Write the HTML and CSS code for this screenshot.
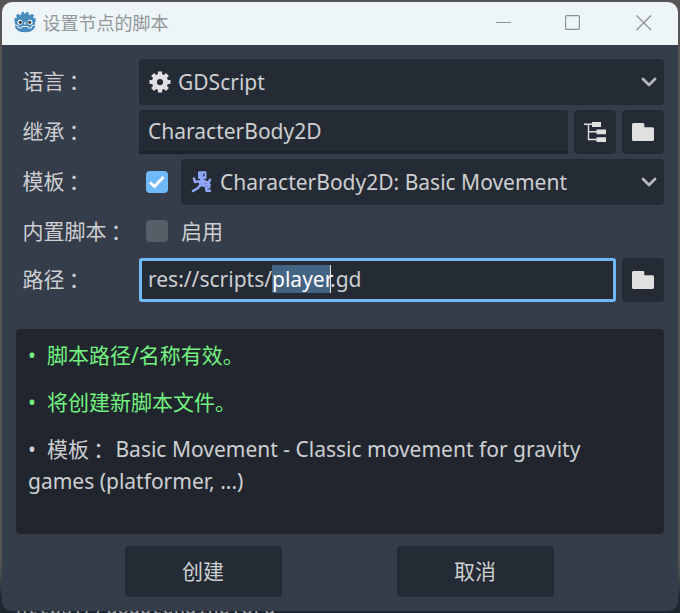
FILE: index.html
```html
<!DOCTYPE html>
<html lang="zh-CN">
<head>
<meta charset="utf-8">
<title>设置节点的脚本</title>
<link rel="stylesheet" href="styles.css">
</head>
<body>
<div class="backdrop-text" aria-hidden="true">https://godotengine.org</div>
<main class="window">
  <header class="titlebar">
    <svg class="logo" viewBox="0 0 22 22">
      <path fill="#478cbf" d="M7.500 1.500 9.500.5 10.300 2.500H11.700L12.500.5 14.500 1.500 14.700 3.500 16 4.300 18 2.700 20 4.600 19 7H21.500V11H21V16Q19 21.300 11 21.300T1 16V11H.5V7H3L2 4.600 4 2.700 6 4.300 7.300 3.500Z"/>
      <path fill="none" stroke="#fff" stroke-width=".9" d="M1 14 4 14.500 4.500 17H7.500L8 15.500H14L14.500 17H17.500L18 14.500 21 14"/>
      <circle cx="6" cy="11.300" r="2.500" fill="#fff"/><circle cx="16" cy="11.300" r="2.500" fill="#fff"/>
      <circle cx="6.300" cy="11.300" r="1.600" fill="#414042"/><circle cx="15.700" cy="11.300" r="1.600" fill="#414042"/>
      <path stroke="#fff" stroke-width="1.300" d="M11 11V13.500"/>
    </svg>
    <span class="title">设置节点的脚本</span>
    <svg class="controls" viewBox="0 0 156 16" fill="none" stroke="#8b9092" stroke-width="1.200">
      <path d="M0 7.500H15"/><rect x="69.600" y=".6" width="13.800" height="13.800" rx="1"/><path d="M140.500.5 155 15M155 .5 140.500 15"/>
    </svg>
  </header>
  <form class="form">
    <div class="row"><label>语言<i lang="zh-TW">：</i></label>
      <div class="select">
        <svg class="icon" viewBox="0 0 22 22"><path fill="none" stroke="#e0e0e0" stroke-width="4.200" d="M11 .5V5M11 17V21.500M.5 11H5M17 11H21.500M3.600 3.600 6.800 6.800M15.200 15.200 18.400 18.400M3.600 18.400 6.800 15.200M15.200 6.800 18.400 3.600"/><circle cx="11" cy="11" r="5.600" fill="none" stroke="#e0e0e0" stroke-width="5"/></svg>
        <span>GDScript</span>
        <svg class="chevron" viewBox="0 0 16 10"><path d="M2 2 8 8 14 2"/></svg>
      </div>
    </div>
    <div class="row short"><label>继承<i lang="zh-TW">：</i></label>
      <div class="input">CharacterBody2D</div>
      <div class="tool"><svg class="icon" viewBox="0 0 22 22"><path fill="none" stroke="#e0e0e0" stroke-width="1.400" d="M0 3.300H8M4.500 3V18.500H13M4.500 10.800H13"/><path fill="#e0e0e0" d="M8 1H17V6H8ZM12.500 8.500H22V13.300H12.500ZM12.500 16.200H22V21H12.500Z"/></svg></div>
      <div class="tool"><svg class="icon" viewBox="0 0 22 22"><path fill="#e0e0e0" d="M1.500 2H11Q12.300 2 12.300 3.300V6.300H20.500Q22 6.300 22 7.800V18.500Q22 20 20.500 20H1.500Q0 20 0 18.500V3.500Q0 2 1.500 2Z"/></svg></div>
    </div>
    <div class="row"><label>模板<i lang="zh-TW">：</i></label>
      <span class="check on"><svg viewBox="0 0 22 22"><path d="M4 11.500 8.500 15.500 17.500 6"/></svg></span>
      <div class="select">
        <svg class="icon" viewBox="0 0 22 22"><path fill="#8da5f3" d="M7 1Q7 .3 8 .3H14.500Q15.500 .3 15.500 1.300V7Q15.500 8 14.500 8H13V9.500H9V8H8Q7 8 7 7Z"/><path fill="#252b34" d="M12.200 2.800H13.500V5.300H12.200Z"/><path fill="none" stroke="#8da5f3" stroke-width="2.600" stroke-linecap="round" stroke-linejoin="round" d="M3 7.500 4 11 9 10.300H14L17.500 12 19 8.800M9.500 14 6.500 17.300 2 20M12.500 14.500 18.500 13.500M18.500 14 18 16.500 15 16.800 15.500 19.800H19"/><path fill="#8da5f3" d="M8 9.500H14.500V15.500H8Z"/></svg>
        <span>CharacterBody2D: Basic Movement</span>
        <svg class="chevron" viewBox="0 0 16 10"><path d="M2 2 8 8 14 2"/></svg>
      </div>
    </div>
    <div class="row mid"><label>内置脚本<i lang="zh-TW">：</i></label>
      <span class="check"></span><span class="enable">启用</span>
    </div>
    <div class="row path"><label>路径<i lang="zh-TW">：</i></label>
      <div class="input focus">res://scripts/<span class="selected">player</span>.gd</div>
      <div class="tool"><svg class="icon" viewBox="0 0 22 22"><path fill="#e0e0e0" d="M1.500 2H11Q12.300 2 12.300 3.300V6.300H20.500Q22 6.300 22 7.800V18.500Q22 20 20.500 20H1.500Q0 20 0 18.500V3.500Q0 2 1.500 2Z"/></svg></div>
    </div>
  </form>
  <section class="status">
    <p class="ok"><b>•</b>脚本路径/名称有效。</p>
    <p class="ok"><b>•</b>将创建新脚本文件。</p>
    <p><b>•</b>模板<i lang="zh-TW">：</i> Basic Movement - Classic movement for gravity games (platformer, ...)</p>
  </section>
  <footer class="actions"><button>创建</button><button>取消</button></footer>
</main>
</body>
</html>
```
FILE: styles.css
```css
* { box-sizing: border-box; }
body {
  margin: 0;
  width: 680px;
  height: 613px;
  padding: 2px;
  overflow: hidden;
  position: relative;
  background: linear-gradient(#555 0 560px, #46494d 575px, #20262f 600px);
  font: 21px/32px "Noto Sans", "Noto Sans CJK SC", sans-serif;
  color: #cdcfd2;
}
.backdrop-text {
  position: absolute;
  left: 16px;
  top: 599px;
  font: 18.8px/20px "Liberation Mono", monospace;
  color: #a0a3a7;
}
.window {
  position: relative;
  height: 609px;
  border-radius: 10px;
  overflow: hidden;
  background: #363d4a;
}
.titlebar {
  height: 43px;
  display: flex;
  align-items: center;
  padding: 0 26px 2px 12px;
  background: #edf5f8;
}
.logo { width: 22px; height: 22px; margin-top: -1px; }
.title {
  margin: -2px 0 0 6.500px;
  font: 18px/26px "Noto Sans CJK SC", sans-serif;
  color: #929799;
}
.controls { width: 156px; height: 16px; margin-left: auto; }
.form { padding: 14px 14px 0; display: flex; flex-direction: column; gap: 4px; }
.row { display: flex; height: 46px; align-items: center; }
.row.short { height: 44px; margin: 1px 0; }
.row.path { height: 44px; margin-top: -1px; }
label { width: 123px; padding: 0 0 3px 6.500px; flex: none; }
.enable { padding-bottom: 2px; }
i {
  position: relative;
  top: 1px;
  left: -1px;
  font-style: normal;
  font-family: "Noto Sans CJK TC", sans-serif;
  line-height: 1;
}
.select {
  flex: 1;
  height: 46px;
  display: flex;
  align-items: center;
  padding: 0 7px 0 10px;
  border-radius: 4px;
  background: #252b34;
}
.icon { width: 22px; height: 22px; flex: none; }
.select span { margin-left: 7px; }
.chevron {
  width: 16px;
  height: 10px;
  margin-left: auto;
  fill: none;
  stroke: #b4b7bb;
  stroke-width: 2.8;
  stroke-linecap: round;
  stroke-linejoin: round;
}
.input {
  flex: 1;
  height: 44px;
  padding: 5px 9px;
  background: #252b34;
  border-bottom: 3px solid #1e222a;
  border-radius: 3px 3px 0 0;
}
.input.focus {
  border: 3px solid #70bafa;
  border-radius: 3px;
  padding: 2px 6px;
}
.selected {
  display: inline-block;
  width: 59px;
  height: 28px;
  line-height: 28px;
  background: #446484;
  color: #fff;
  border-right: 1px solid #e0e0e0;
  margin-right: -1px;
}
.tool {
  width: 42px;
  height: 44px;
  margin-left: 6px;
  display: grid;
  place-items: center;
  background: #252b34;
  border-radius: 4px;
}
.check {
  width: 22px;
  height: 22px;
  margin: -2px 13px 0 7px;
  border-radius: 4px;
  background: #575e68;
  flex: none;
}
.check.on { background: #70bafa; margin-top: 0; }
.check svg { display: block; fill: none; stroke: #fff; stroke-width: 3; }
.status {
  height: 205px;
  margin: 27px 14px 0;
  padding: 10px 12px;
  background: #21262e;
  border-radius: 4px;
}
.status p { margin: 0 0 15px; }
.status .ok { color: #73f280; }
b { display: inline-block; width: 19px; font-weight: 400; }
.actions { display: flex; justify-content: center; gap: 115px; margin: 12px 2px 0 0; }
button {
  width: 157px;
  height: 51px;
  padding: 0 0 1px;
  border: 0;
  border-radius: 4px;
  background: #252b34;
  color: inherit;
  font: inherit;
}
```
